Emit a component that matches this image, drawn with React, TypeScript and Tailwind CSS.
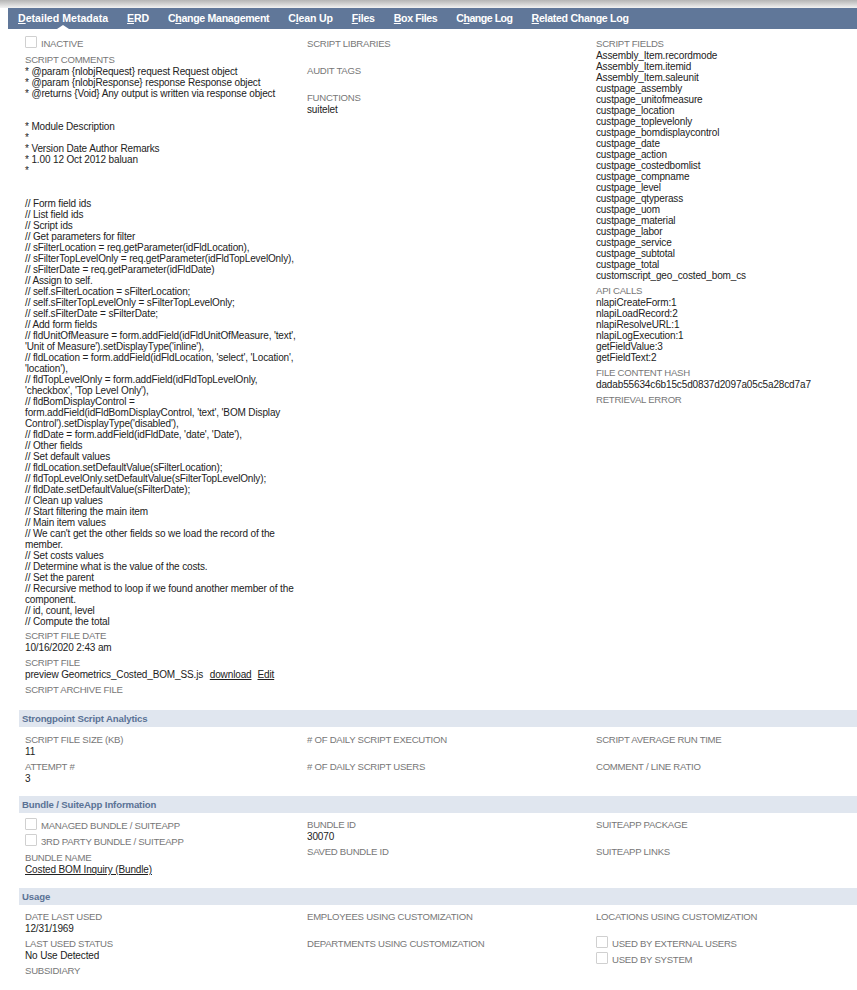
import React from 'react';

const tabs = [
  { head: 'D', rest: 'etailed Metadata', cls: 'tracking-normal' },
  { head: 'E', rest: 'RD', cls: 'tracking-[-0.2px]' },
  { pre: 'C', head: 'h', rest: 'ange Management', cls: 'tracking-[-0.3px]' },
  { pre: 'C', head: 'l', rest: 'ean Up', cls: 'tracking-[-0.2px]' },
  { head: 'F', rest: 'iles', cls: 'tracking-[-0.2px]' },
  { head: 'B', rest: 'ox Files', cls: 'tracking-[-0.4px]' },
  { pre: 'C', head: 'h', rest: 'ange Log', cls: 'tracking-[-0.5px]' },
  { head: 'R', rest: 'elated Change Log', cls: 'tracking-[-0.3px]' },
];

const comments = [
  '* @param {nlobjRequest} request Request object',
  '* @param {nlobjResponse} response Response object',
  '* @returns {Void} Any output is written via response object',
  '',
  '',
  '* Module Description',
  '*',
  '* Version Date Author Remarks',
  '* 1.00 12 Oct 2012 baluan',
  '*',
  '',
  '',
  '// Form field ids',
  '// List field ids',
  '// Script ids',
  '// Get parameters for filter',
  '// sFilterLocation = req.getParameter(idFldLocation),',
  '// sFilterTopLevelOnly = req.getParameter(idFldTopLevelOnly),',
  '// sFilterDate = req.getParameter(idFldDate)',
  '// Assign to self.',
  '// self.sFilterLocation = sFilterLocation;',
  '// self.sFilterTopLevelOnly = sFilterTopLevelOnly;',
  '// self.sFilterDate = sFilterDate;',
  '// Add form fields',
  "// fldUnitOfMeasure = form.addField(idFldUnitOfMeasure, 'text',",
  "'Unit of Measure').setDisplayType('inline'),",
  "// fldLocation = form.addField(idFldLocation, 'select', 'Location',",
  "'location'),",
  '// fldTopLevelOnly = form.addField(idFldTopLevelOnly,',
  "'checkbox', 'Top Level Only'),",
  '// fldBomDisplayControl =',
  "form.addField(idFldBomDisplayControl, 'text', 'BOM Display",
  "Control').setDisplayType('disabled'),",
  "// fldDate = form.addField(idFldDate, 'date', 'Date'),",
  '// Other fields',
  '// Set default values',
  '// fldLocation.setDefaultValue(sFilterLocation);',
  '// fldTopLevelOnly.setDefaultValue(sFilterTopLevelOnly);',
  '// fldDate.setDefaultValue(sFilterDate);',
  '// Clean up values',
  '// Start filtering the main item',
  '// Main item values',
  "// We can't get the other fields so we load the record of the",
  'member.',
  '// Set costs values',
  '// Determine what is the value of the costs.',
  '// Set the parent',
  '// Recursive method to loop if we found another member of the',
  'component.',
  '// id, count, level',
  '// Compute the total',
];

const scriptFields = [
  'Assembly_Item.recordmode',
  'Assembly_Item.itemid',
  'Assembly_Item.saleunit',
  'custpage_assembly',
  'custpage_unitofmeasure',
  'custpage_location',
  'custpage_toplevelonly',
  'custpage_bomdisplaycontrol',
  'custpage_date',
  'custpage_action',
  'custpage_costedbomlist',
  'custpage_compname',
  'custpage_level',
  'custpage_qtyperass',
  'custpage_uom',
  'custpage_material',
  'custpage_labor',
  'custpage_service',
  'custpage_subtotal',
  'custpage_total',
  'customscript_geo_costed_bom_cs',
];

const apiCalls = [
  'nlapiCreateForm:1',
  'nlapiLoadRecord:2',
  'nlapiResolveURL:1',
  'nlapiLogExecution:1',
  'getFieldValue:3',
  'getFieldText:2',
];

function Field({ label, lines, children }: { label: string; lines?: string[]; children?: React.ReactNode }) {
  return (
    <div className="mb-[5px]">
      <div className="h-[11px] whitespace-nowrap text-[9.6px] leading-[9px] tracking-[-0.27px] text-[#777]">{label}</div>
      {lines
        ? lines.map((l, i) => (
            <div key={i} className="h-[11px] whitespace-nowrap text-[#222]">
              {l}
            </div>
          ))
        : children || <div className="h-[11px]" />}
    </div>
  );
}

function Check({ label }: { label: string }) {
  return (
    <div className="flex h-4 items-center">
      <span className="mr-1 h-3 w-3 rounded-[1px] border border-[#d0d0d0] bg-white" />
      <span className="mt-[3px] text-[9.6px] tracking-[-0.27px] text-[#777]">{label}</span>
    </div>
  );
}

function Band({ title }: { title: string }) {
  return (
    <div className="ml-[19px] flex h-[17px] items-center bg-[#e0e6ef] pl-[3px] text-[9.6px] font-bold text-[#5a7295]">
      {title}
    </div>
  );
}

function Row({ a, b, c, className }: { a: React.ReactNode; b: React.ReactNode; c: React.ReactNode; className: string }) {
  return (
    <div className={`grid grid-cols-[282px_289px_1fr] pl-[25px] ${className}`}>
      <div>{a}</div>
      <div>{b}</div>
      <div>{c}</div>
    </div>
  );
}

export default function App() {
  return (
    <div className="h-[990px] w-[857px] overflow-hidden bg-white font-['Liberation_Sans',Arial,sans-serif] text-[10px] leading-[11px] tracking-[-0.135px]">
      <div className="h-2 bg-gradient-to-b from-[#b5b5b5] to-[#f2f2f2]" />
      <nav className="relative ml-2 flex h-[21px] items-center gap-[19px] bg-[#607799] pl-[10px] text-[10.6px] font-bold text-white">
        {tabs.map((t) => (
          <span key={t.head + t.rest} className={`whitespace-nowrap ${t.cls}`}>
            {t.pre}
            <span className="underline">{t.head}</span>
            {t.rest}
          </span>
        ))}
        <span className="absolute bottom-0 left-[49px] h-0 w-0 border-x-[6px] border-b-[4px] border-x-transparent border-b-white" />
      </nav>

      <Row
        className="h-[681px] pt-[10px]"
        a={
          <>
            <div className="-mt-[5px]">
              <Check label="INACTIVE" />
            </div>
            <div className="h-[5px]" />
            <Field label="SCRIPT COMMENTS" lines={comments} />
            <div className="-mt-px">
              <Field label="SCRIPT FILE DATE" lines={['10/16/2020 2:43 am']} />
            </div>
            <Field label="SCRIPT FILE">
              <div className="h-[11px] whitespace-nowrap text-[#222]">
                preview Geometrics_Costed_BOM_SS.js <span className="ml-1 underline">download</span>
                <span className="ml-[6px] underline">Edit</span>
              </div>
            </Field>
            <Field label="SCRIPT ARCHIVE FILE" />
          </>
        }
        b={
          <>
            <Field label="SCRIPT LIBRARIES" />
            <Field label="AUDIT TAGS" />
            <Field label="FUNCTIONS" lines={['suitelet']} />
          </>
        }
        c={
          <>
            <Field label="SCRIPT FIELDS" lines={scriptFields} />
            <Field label="API CALLS" lines={apiCalls} />
            <Field label="FILE CONTENT HASH" lines={['dadab55634c6b15c5d0837d2097a05c5a28cd7a7']} />
            <Field label="RETRIEVAL ERROR" />
          </>
        }
      />

      <Band title="Strongpoint Script Analytics" />
      <Row
        className="h-[69px] pt-[8px]"
        a={
          <>
            <Field label="SCRIPT FILE SIZE (KB)" lines={['11']} />
            <Field label="ATTEMPT #" lines={['3']} />
          </>
        }
        b={
          <>
            <Field label="# OF DAILY SCRIPT EXECUTION" />
            <Field label="# OF DAILY SCRIPT USERS" />
          </>
        }
        c={
          <>
            <Field label="SCRIPT AVERAGE RUN TIME" />
            <Field label="COMMENT / LINE RATIO" />
          </>
        }
      />

      <Band title="Bundle / SuiteApp Information" />
      <Row
        className="h-[75px] pt-[3px]"
        a={
          <>
            <Check label="MANAGED BUNDLE / SUITEAPP" />
            <Check label="3RD PARTY BUNDLE / SUITEAPP" />
            <div className="h-[5px]" />
            <Field label="BUNDLE NAME">
              <div className="h-[11px] whitespace-nowrap text-[#222] underline">Costed BOM Inquiry (Bundle)</div>
            </Field>
          </>
        }
        b={
          <div className="pt-[4px]">
            <Field label="BUNDLE ID" lines={['30070']} />
            <Field label="SAVED BUNDLE ID" />
          </div>
        }
        c={
          <div className="pt-[4px]">
            <Field label="SUITEAPP PACKAGE" />
            <Field label="SUITEAPP LINKS" />
          </div>
        }
      />

      <Band title="Usage" />
      <Row
        className="pt-[7px]"
        a={
          <>
            <Field label="DATE LAST USED" lines={['12/31/1969']} />
            <Field label="LAST USED STATUS" lines={['No Use Detected']} />
            <Field label="SUBSIDIARY" />
          </>
        }
        b={
          <>
            <Field label="EMPLOYEES USING CUSTOMIZATION" />
            <Field label="DEPARTMENTS USING CUSTOMIZATION" />
          </>
        }
        c={
          <>
            <Field label="LOCATIONS USING CUSTOMIZATION" />
            <div className="-mt-[5px]">
              <Check label="USED BY EXTERNAL USERS" />
              <Check label="USED BY SYSTEM" />
            </div>
          </>
        }
      />
    </div>
  );
}
